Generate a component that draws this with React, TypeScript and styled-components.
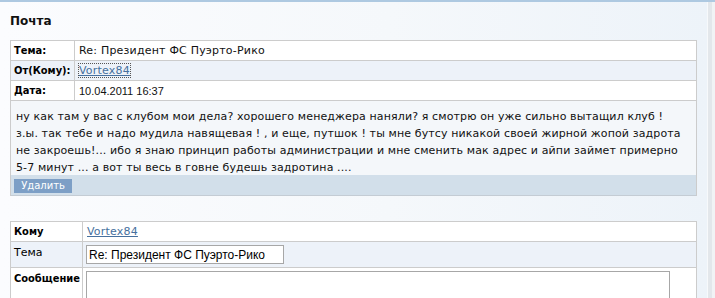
import React from 'react';
import styled, { createGlobalStyle } from 'styled-components';

//Styles:
const GlobalStyle = createGlobalStyle`
    html, body {
        margin: 0;
        padding: 0;
        background: #f4f7fb;
    }
    body {
        font-family: 'DejaVu Sans', Verdana, sans-serif;
        font-size: 11px;
        color: #111;
    }
`;

const Page = styled.div`
    display: flex;
    width: 715px;
    height: 298px;
    overflow: hidden;
    border-top: 2px solid #aec9e1;
    box-sizing: border-box;
`;

const Main = styled.div`
    flex: 1;
    padding: 0 10px 0 10px;
    background: linear-gradient(to right, #fbfcfe 0%, #f5f8fb 55%, #edf3f9 100%);
`;

const ScrollStrip = styled.div`
    width: 8px;
    background: linear-gradient(to right, #f7f9fb 0px, #f7f9fb 1px, #e3e7eb 1px, #e3e7eb 5px, #f1f3f5 5px);
`;

const Title = styled.h1`
    margin: 0;
    height: 38px;
    display: flex;
    align-items: center;
    font-size: 12px;
    font-weight: bold;
    color: #111;
`;

const Card = styled.div`
    border: 1px solid #cccccc;
    border-bottom: none;
`;

const Row = styled.div<{ alt?: boolean; height: number; labelWidth: number }>`
    display: grid;
    grid-template-columns: ${(p) => p.labelWidth}px 1fr;
    height: ${(p) => p.height}px;
    border-bottom: 1px solid #cccccc;
    background: ${(p) => (p.alt ? '#edf2f9' : '#ffffff')};
`;

const Label = styled.div<{ plain?: boolean; top?: boolean }>`
    border-right: 1px solid #cccccc;
    padding: ${(p) => (p.top ? '4px 0 0 3px' : '0 0 0 3px')};
    display: flex;
    align-items: ${(p) => (p.top ? 'flex-start' : 'center')};
    font-family: ${(p) => (p.plain ? "'DejaVu Sans', sans-serif" : "'DejaVu Sans Condensed', 'DejaVu Sans', sans-serif")};
    font-weight: ${(p) => (p.plain ? 'normal' : 'bold')};
    font-stretch: ${(p) => (p.plain ? 'normal' : 'condensed')};
    white-space: nowrap;
    overflow: hidden;
    color: #000;
`;

const Value = styled.div<{ top?: boolean; numeric?: boolean }>`
    padding: ${(p) => (p.top ? '3px 0 0 3px' : '0 0 0 4px')};
    display: flex;
    align-items: ${(p) => (p.top ? 'flex-start' : 'center')};
    letter-spacing: ${(p) => (p.numeric ? '0' : '0.2px')};
    font-family: ${(p) => (p.numeric ? "'Liberation Sans', Arial, sans-serif" : "'DejaVu Sans', sans-serif")};
`;

const UserLink = styled.a<{ focused?: boolean }>`
    color: #46709e;
    text-decoration: underline;
    outline: ${(p) => (p.focused ? '1px dotted #555' : 'none')};
    cursor: pointer;
`;

const Message = styled.div`
    background: #f4f7fa;
    padding: 7px 6px 6px 5px;
    line-height: 17px;
    height: 74px;
    box-sizing: border-box;
    letter-spacing: 0.12px;
    white-space: nowrap;
`;

const ActionBar = styled.div`
    background: #d2dfea;
    height: 21px;
    padding: 4px 0 0 3px;
    box-sizing: border-box;
    border-bottom: 1px solid #c4ccd4;
`;

const DeleteButton = styled.button`
    width: 58px;
    height: 14px;
    border: none;
    padding: 0;
    background: #7d9fc6;
    color: #fff;
    font-family: 'DejaVu Sans', Verdana, sans-serif;
    font-size: 10px;
    line-height: 14px;
    cursor: pointer;
    display: block;
`;

const Spacer = styled.div`
    height: 25px;
`;

const SubjectInput = styled.input`
    width: 198px;
    height: 19px;
    box-sizing: border-box;
    border: 1px solid #a7a7a7;
    padding: 0 2px;
    font-family: 'Liberation Sans', Arial, sans-serif;
    font-size: 12px;
    letter-spacing: 0;
    color: #000;
    background: #fff;
    outline: none;
`;

const BodyInput = styled.textarea`
    width: 584px;
    height: 60px;
    box-sizing: border-box;
    border: 1px solid #a7a7a7;
    resize: none;
    background: #fff;
`;

const App = (): JSX.Element => {
    return (
        <>
            <GlobalStyle />
            <Page>
                <Main>
                    <Title>Почта</Title>
                    <Card>
                        <Row height={19} labelWidth={64}>
                            <Label>Тема:</Label>
                            <Value>Re: Президент ФС Пуэрто-Рико</Value>
                        </Row>
                        <Row height={19} labelWidth={64} alt>
                            <Label>От(Кому):</Label>
                            <Value>
                                <UserLink focused>Vortex84</UserLink>
                            </Value>
                        </Row>
                        <Row height={19} labelWidth={64}>
                            <Label>Дата:</Label>
                            <Value numeric>10.04.2011 16:37</Value>
                        </Row>
                        <Message>
                            ну как там у вас с клубом мои дела? хорошего менеджера наняли? я смотрю он уже сильно вытащил клуб !
                            <br />
                            з.ы. так тебе и надо мудила навящевая ! , и еще, путшок ! ты мне бутсу никакой своей жирной жопой задрота
                            <br />
                            не закроешь!... ибо я знаю принцип работы администрации и мне сменить мак адрес и айпи займет примерно
                            <br />
                            5-7 минут ... а вот ты весь в говне будешь задротина ....
                        </Message>
                        <ActionBar>
                            <DeleteButton>Удалить</DeleteButton>
                        </ActionBar>
                    </Card>
                    <Spacer />
                    <Card>
                        <Row height={19} labelWidth={72}>
                            <Label>Кому</Label>
                            <Value>
                                <UserLink>Vortex84</UserLink>
                            </Value>
                        </Row>
                        <Row height={25} labelWidth={72} alt>
                            <Label plain top>
                                Тема
                            </Label>
                            <Value top>
                                <SubjectInput defaultValue="Re: Президент ФС Пуэрто-Рико" />
                            </Value>
                        </Row>
                        <Row height={60} labelWidth={72}>
                            <Label top>Сообщение</Label>
                            <Value top>
                                <BodyInput />
                            </Value>
                        </Row>
                    </Card>
                </Main>
                <ScrollStrip />
            </Page>
        </>
    );
};

export default App;
